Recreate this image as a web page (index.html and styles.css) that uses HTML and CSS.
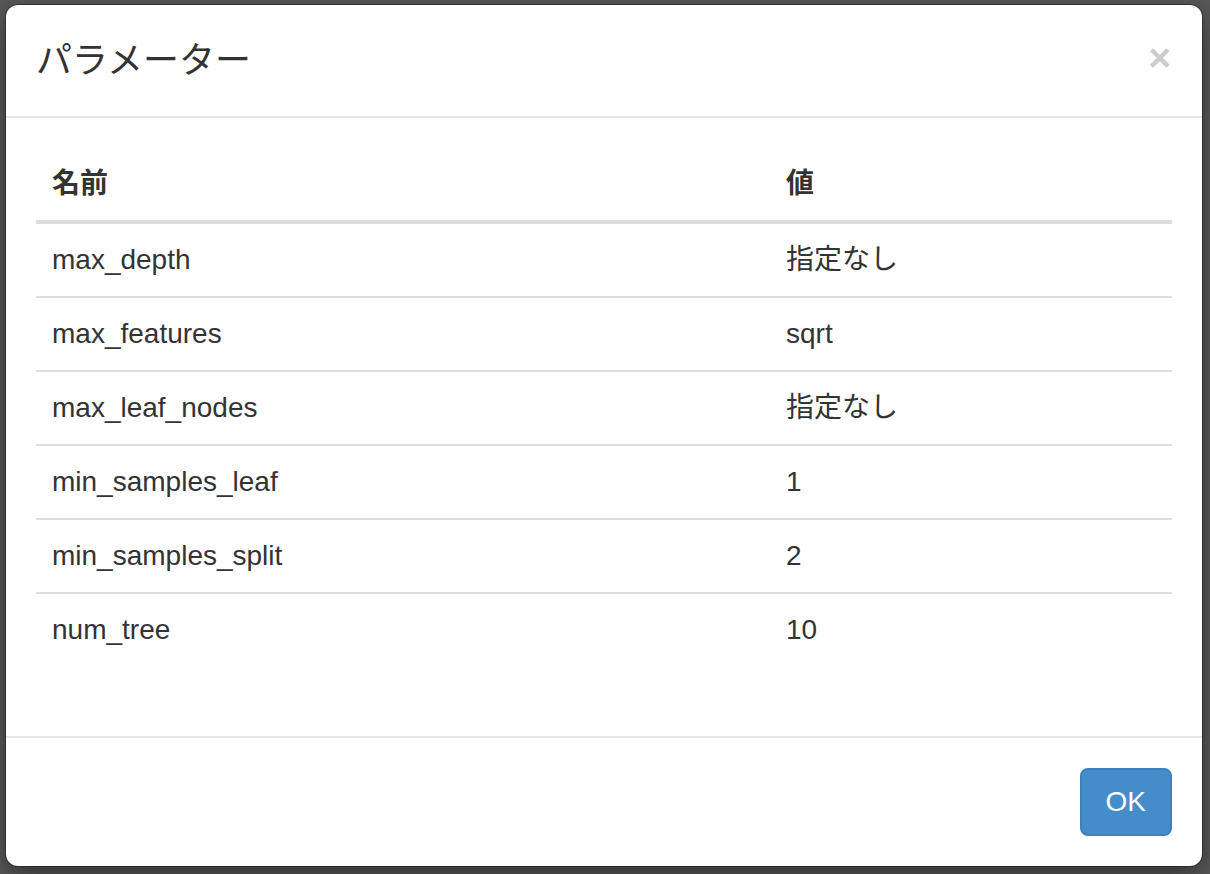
FILE: index.html
```html
<!DOCTYPE html>
<html lang="ja">
<head>
<meta charset="utf-8">
<title>パラメーター</title>
<link rel="stylesheet" href="styles.css">
</head>
<body>
<div class="modal">
  <div class="modal-header">
    <button class="close" type="button">×</button>
    <h4 class="modal-title">パラメーター</h4>
  </div>
  <div class="modal-body">
    <table class="table">
      <thead>
        <tr><th class="col-name">名前</th><th>値</th></tr>
      </thead>
      <tbody>
        <tr><td>max_depth</td><td>指定なし</td></tr>
        <tr><td>max_features</td><td>sqrt</td></tr>
        <tr><td>max_leaf_nodes</td><td>指定なし</td></tr>
        <tr><td>min_samples_leaf</td><td>1</td></tr>
        <tr><td>min_samples_split</td><td>2</td></tr>
        <tr><td>num_tree</td><td>10</td></tr>
      </tbody>
    </table>
  </div>
  <div class="modal-footer">
    <button class="btn" type="button">OK</button>
  </div>
</div>
</body>
</html>
```
FILE: styles.css
```css
html, body {
  margin: 0;
  padding: 0;
}
body {
  background: #585858;
  font-family: "Liberation Sans", "Noto Sans CJK JP", sans-serif;
  color: #333;
  font-size: 28px;
  line-height: 40px;
  height: 874px;
  overflow: hidden;
}
.modal {
  box-sizing: border-box;
  width: 1196px;
  margin: 5px 0 0 6px;
  background: #fff;
  border-radius: 12px;
  box-shadow: 0 0 0 1px rgba(0, 0, 0, 0.35), 0 8px 24px rgba(0, 0, 0, 0.45);
}
.modal-header {
  padding: 30px;
  border-bottom: 2px solid #e5e5e5;
}
.modal-title {
  margin: 0;
  font-size: 36px;
  line-height: 51px;
  font-weight: 400;
  color: #333;
}
.close {
  float: right;
  margin-top: -3px;
  margin-right: 1px;
  padding: 0;
  border: 0;
  background: transparent;
  font-family: "Liberation Sans", sans-serif;
  font-size: 39px;
  font-weight: 700;
  line-height: 51px;
  color: #000;
  opacity: 0.2;
  cursor: pointer;
}
.modal-body {
  padding: 30px;
}
.table {
  width: 100%;
  border-collapse: collapse;
  margin-bottom: 40px;
}
.table th,
.table td {
  text-align: left;
  padding: 16px;
  line-height: 40px;
  vertical-align: top;
}
.table th {
  font-weight: 700;
  border-bottom: 4px solid #ddd;
}
.table td {
  border-top: 2px solid #ddd;
}
.col-name {
  width: 702px;
}
.modal-footer {
  padding: 30px;
  text-align: right;
  border-top: 2px solid #e5e5e5;
}
.btn {
  display: inline-block;
  padding: 12px 24px;
  font-family: "Liberation Sans", sans-serif;
  font-size: 28px;
  line-height: 40px;
  color: #fff;
  background: #458cca;
  border: 2px solid #3d80bf;
  border-radius: 8px;
  vertical-align: top;
}
```
